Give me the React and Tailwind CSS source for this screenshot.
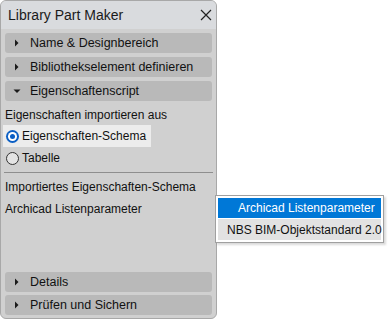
import React from "react";

function Tri({ down }) {
  return down ? (
    <svg width="8" height="8" viewBox="0 0 8 8" className="shrink-0">
      <path d="M0.5 2.5 L7.5 2.5 L4 6 Z" fill="#1a1a1a" />
    </svg>
  ) : (
    <svg width="8" height="8" viewBox="0 0 8 8" className="shrink-0">
      <path d="M2 0.5 L5.5 4 L2 7.5 Z" fill="#1a1a1a" />
    </svg>
  );
}

function Section({ label, down }) {
  return (
    <div className="h-[20px] mx-[4px] rounded-[3px] bg-[#b9b9b9] flex items-center pl-[8px] gap-[9px] text-[12.5px] text-[#111] whitespace-nowrap">
      <Tri down={down} />
      <span>{label}</span>
    </div>
  );
}

function Radio({ checked }) {
  return checked ? (
    <span className="w-[13px] h-[13px] rounded-full bg-[#0a5ec4] flex items-center justify-center shrink-0">
      <span className="w-[9px] h-[9px] rounded-full bg-white flex items-center justify-center">
        <span className="w-[5px] h-[5px] rounded-full bg-[#0a5ec4]" />
      </span>
    </span>
  ) : (
    <span className="w-[13px] h-[13px] rounded-full border border-[#333] bg-[#e4e4e4] shrink-0" />
  );
}

export default function App() {
  return (
    <div
      className="w-[389px] h-[321px] bg-white relative"
      style={{ fontFamily: '"Liberation Sans", Arial, sans-serif' }}
    >
      <div className="w-[217px] h-[319px] rounded-[6px] border border-[#a8a8a8] bg-[#d0d0d0] flex flex-col overflow-hidden">
        <div className="h-[28px] bg-[#d9dbde] flex items-center justify-between pl-[7px] pr-[3px] text-[14px] text-[#1a1a1a]">
          <span>Library Part Maker</span>
          <svg width="14" height="14" viewBox="0 0 14 14">
            <path d="M2 2 L12 12 M12 2 L2 12" stroke="#222" strokeWidth="1.2" />
          </svg>
        </div>
        <div className="flex flex-col gap-[4px] pt-[4px]">
          <Section label="Name & Designbereich" />
          <Section label="Bibliothekselement definieren" />
          <Section label="Eigenschaftenscript" down />
        </div>
        <div className="pt-[5px] text-[12px] text-[#111] flex flex-col whitespace-nowrap">
          <div className="h-[18px] flex items-center pl-[4px]">Eigenschaften importieren aus</div>
          <div className="h-[22px] w-[148px] mt-[1px] ml-[2px] bg-[#ececec] flex items-center pl-[3px] gap-[3px]">
            <Radio checked />
            <span>Eigenschaften-Schema</span>
          </div>
          <div className="h-[22px] ml-[2px] flex items-center pl-[3px] gap-[3px]">
            <Radio />
            <span>Tabelle</span>
          </div>
          <div className="h-px bg-[#8e8e8e] mx-[3px] mt-[3px]" />
          <div className="h-[22px] mt-[3px] flex items-center pl-[4px]">Importiertes Eigenschaften-Schema</div>
          <div className="h-[22px] flex items-center pl-[4px]">Archicad Listenparameter</div>
        </div>
        <div className="flex-1" />
        <div className="flex flex-col gap-[3px] pb-[3px]">
          <Section label="Details" />
          <Section label="Prüfen und Sichern" />
        </div>
      </div>

      <div className="absolute left-[219px] top-[199px] w-[16px] h-[17px] rounded-[2px] bg-[#c8dcf0] border border-[#a9c4e0] flex items-center justify-center">
        <svg width="8" height="8" viewBox="0 0 8 8">
          <path d="M2 0.5 L5.5 4 L2 7.5 Z" fill="#1a1a1a" />
        </svg>
      </div>

      <div className="absolute left-[215px] top-[195px] w-[169px] bg-white border border-[#a0a0a0] p-[2px] text-[12px] whitespace-nowrap shadow-[2px_2px_2px_rgba(0,0,0,0.15)]">
        <div className="h-[20px] bg-[#0078d7] text-white flex items-center pl-[20px]">Archicad Listenparameter</div>
        <div className="h-[21px] mt-[1px] bg-[#e2e2e2] text-[#111] flex items-center pl-[9px]">NBS BIM-Objektstandard 2.0</div>
      </div>
    </div>
  );
}
